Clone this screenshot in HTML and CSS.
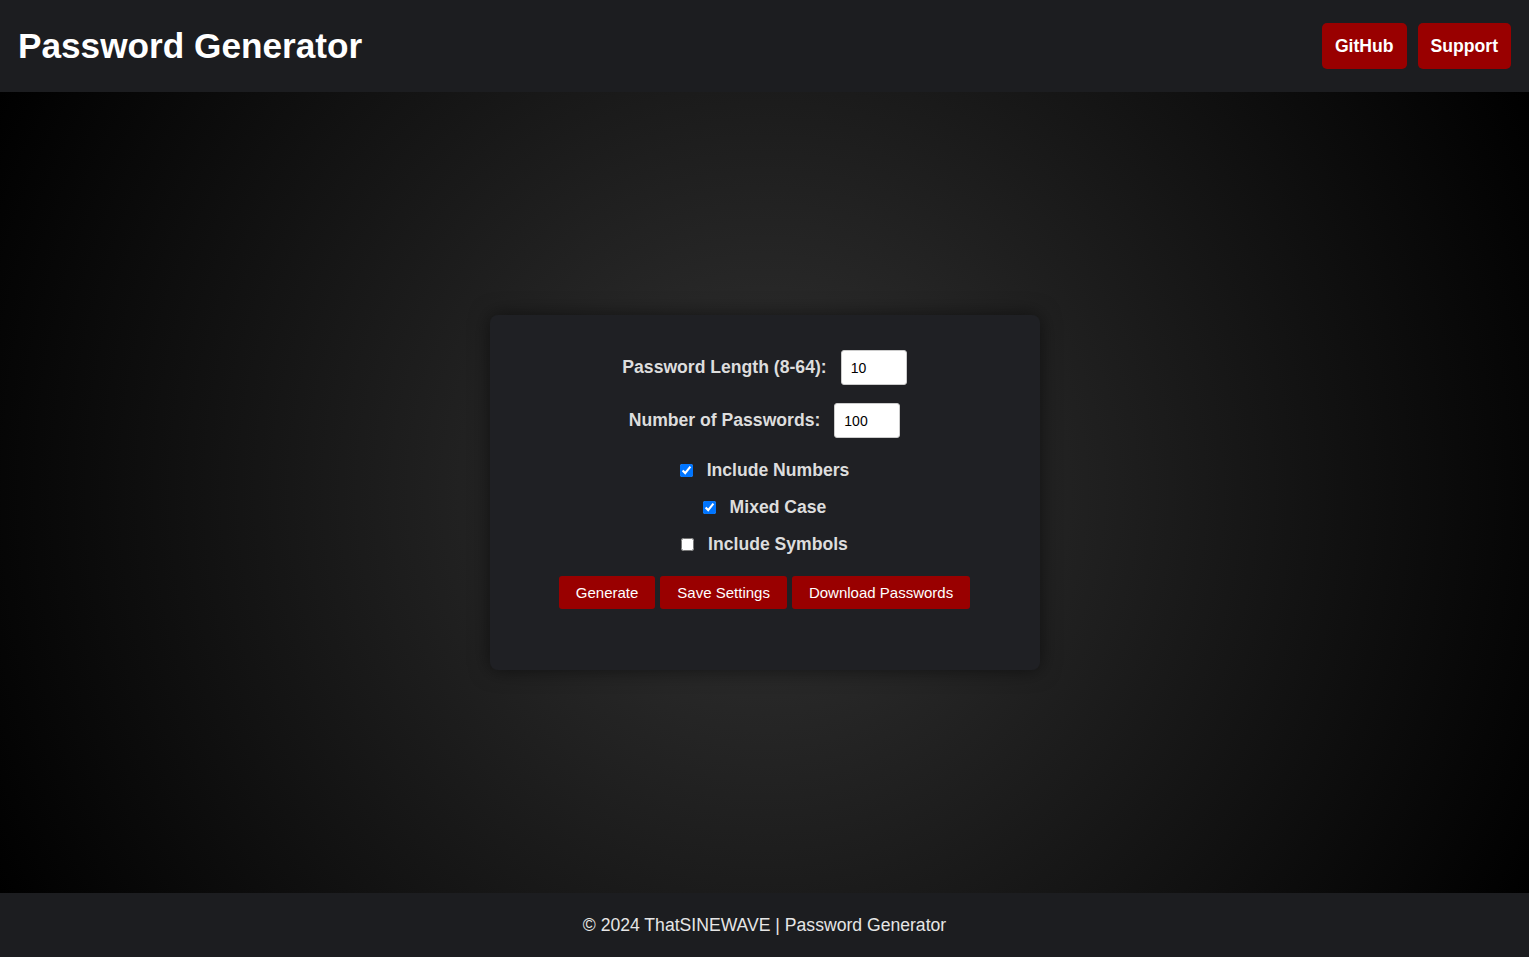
FILE: index.html
```html
<!DOCTYPE html>
<html lang="en">
<head>
<meta charset="utf-8">
<title>Password Generator</title>
<link rel="stylesheet" href="styles.css">
</head>
<body>
<header class="topbar">
  <h1 class="title">Password Generator</h1>
  <nav class="nav">
    <a class="nav-btn" href="#">GitHub</a>
    <a class="nav-btn" href="#">Support</a>
  </nav>
</header>
<main class="main">
  <section class="card">
    <div class="field">
      <label class="field-label" for="len">Password Length (8-64):</label>
      <input class="num-input" id="len" type="number" value="10">
    </div>
    <div class="field field-2">
      <label class="field-label" for="count">Number of Passwords:</label>
      <input class="num-input" id="count" type="number" value="100">
    </div>
    <div class="checks">
      <label class="check"><input type="checkbox" checked><span>Include Numbers</span></label>
      <label class="check"><input type="checkbox" checked><span>Mixed Case</span></label>
      <label class="check"><input type="checkbox"><span>Include Symbols</span></label>
    </div>
    <div class="actions">
      <button class="act-btn">Generate</button>
      <button class="act-btn">Save Settings</button>
      <button class="act-btn">Download Passwords</button>
    </div>
  </section>
</main>
<footer class="footer">© 2024 ThatSINEWAVE | Password Generator</footer>
</body>
</html>
```

FILE: styles.css
```css
* { box-sizing: border-box; }
html, body { height: 100%; }
body {
  margin: 0;
  font-family: "Liberation Sans", Arial, sans-serif;
  display: flex;
  flex-direction: column;
  background: #000;
  color: #ddd;
}
.topbar {
  height: 92px;
  flex: none;
  background: #1c1d20;
  display: flex;
  align-items: center;
  justify-content: space-between;
  padding: 0 18px;
}
.title {
  margin: 0;
  font-size: 35.2px;
  font-weight: bold;
  color: #fff;
}
.nav { display: flex; gap: 11px; }
.nav-btn {
  display: block;
  height: 46px;
  line-height: 46px;
  padding: 0 13px;
  background: #990000;
  color: #fff;
  font-weight: bold;
  font-size: 17.6px;
  text-decoration: none;
  border-radius: 5px;
}
.main {
  flex: 1;
  display: flex;
  align-items: center;
  justify-content: center;
  background: radial-gradient(circle at center, #333 0%, #000 100%);
}
.card {
  width: 550px;
  height: 355px;
  background: #1f2024;
  border-radius: 8px;
  box-shadow: 0 0 20px rgba(0,0,0,0.55);
  padding-top: 35px;
  display: flex;
  flex-direction: column;
  align-items: center;
}
.field {
  display: flex;
  align-items: center;
  gap: 14px;
  height: 35px;
}
.field-2 { margin-top: 18px; }
.field-label {
  font-size: 17.6px;
  font-weight: bold;
  color: #ddd;
}
.num-input {
  width: 66px;
  height: 35px;
  padding: 0 9px;
  font-family: "Liberation Sans", Arial, sans-serif;
  font-size: 14px;
  color: #000;
  background: #fff;
  border: 1px solid #ccc;
  border-radius: 3px;
  -moz-appearance: textfield;
}
.num-input::-webkit-outer-spin-button,
.num-input::-webkit-inner-spin-button { -webkit-appearance: none; margin: 0; }
.checks {
  margin-top: 22px;
  display: flex;
  flex-direction: column;
  align-items: center;
  gap: 16px;
}
.check {
  display: flex;
  align-items: center;
  height: 21px;
  font-size: 17.6px;
  font-weight: bold;
  color: #ddd;
}
.check input {
  width: 13px;
  height: 13px;
  margin: 0 14px 0 0;
}
.actions {
  margin-top: 21px;
  display: flex;
  gap: 5px;
}
.act-btn {
  height: 33px;
  padding: 0 17px;
  border: none;
  border-radius: 3px;
  background: #990000;
  color: #fff;
  font-family: "Liberation Sans", Arial, sans-serif;
  font-size: 15px;
}
.footer {
  height: 64px;
  flex: none;
  background: #1c1d20;
  display: flex;
  align-items: center;
  justify-content: center;
  font-size: 17.6px;
  color: #e6e6e6;
}
```
